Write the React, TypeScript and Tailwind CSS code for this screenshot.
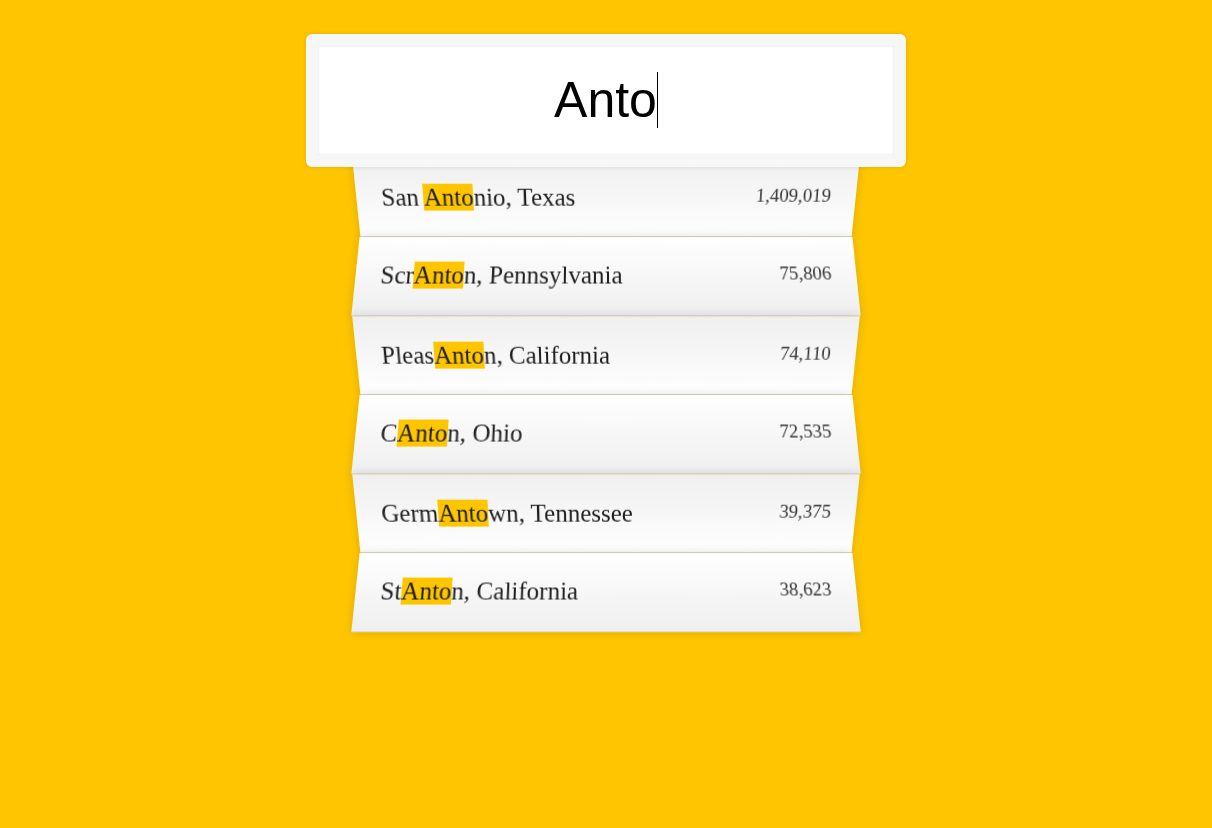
import React from 'react';

type City = {
  before: string;
  match: string;
  after: string;
  population: string;
};

const cities: City[] = [
  { before: 'San ', match: 'Anto', after: 'nio, Texas', population: '1,409,019' },
  { before: 'Scr', match: 'Anto', after: 'n, Pennsylvania', population: '75,806' },
  { before: 'Pleas', match: 'Anto', after: 'n, California', population: '74,110' },
  { before: 'C', match: 'Anto', after: 'n, Ohio', population: '72,535' },
  { before: 'Germ', match: 'Anto', after: 'wn, Tennessee', population: '39,375' },
  { before: 'St', match: 'Anto', after: 'n, California', population: '38,623' },
];

const SuggestionItem: React.FC<{ city: City; index: number }> = ({ city, index }) => {
  const odd = index % 2 === 0;
  return (
    <li
      className={
        odd
          ? 'flex justify-between p-[25px] leading-[28px] border-b border-[#D8D8D8] shadow-[0_0_10px_rgba(0,0,0,0.14)] bg-linear-to-t from-white to-[#EFEFEF] [transform:perspective(125px)_rotateX(-3deg)_translateY(3.75px)]'
          : 'flex justify-between p-[25px] leading-[28px] border-b border-[#D8D8D8] shadow-[0_0_10px_rgba(0,0,0,0.14)] bg-linear-to-b from-white to-[#EFEFEF] [transform:perspective(125px)_rotateX(3deg)_translateY(2.5px)_scale(1.001)]'
      }
    >
      <span className="text-[25px] text-[#1e1e1e]">
        {city.before}
        <span className="bg-[#ffc600]">{city.match}</span>
        {city.after}
      </span>
      <span className="text-[18.75px] leading-[24px] text-[#333]">{city.population}</span>
    </li>
  );
};

const App: React.FC = () => {
  return (
    <div className="min-h-screen bg-[#ffc600] pt-[22px] font-['Liberation_Serif',serif]">
      <form className="w-[500px] mx-auto" onSubmit={(e) => e.preventDefault()}>
        <div className="relative top-[11.5px] z-10 -ml-[50px] w-[600px] h-[133px] border-[12.5px] border-[#F7F7F7] rounded-[6px] bg-white shadow-[0_0_5px_rgba(0,0,0,0.12),inset_0_0_2px_rgba(0,0,0,0.19)] flex items-center justify-center">
          <span className="text-[50px] leading-none text-black font-['Liberation_Sans',Arial,sans-serif]">Anto</span>
          <span className="w-px h-[56px] bg-black" />
        </div>
        <ul className="relative m-0 p-0 list-none">
          {cities.map((city, i) => (
            <SuggestionItem key={i} city={city} index={i} />
          ))}
        </ul>
      </form>
    </div>
  );
};

export default App;
